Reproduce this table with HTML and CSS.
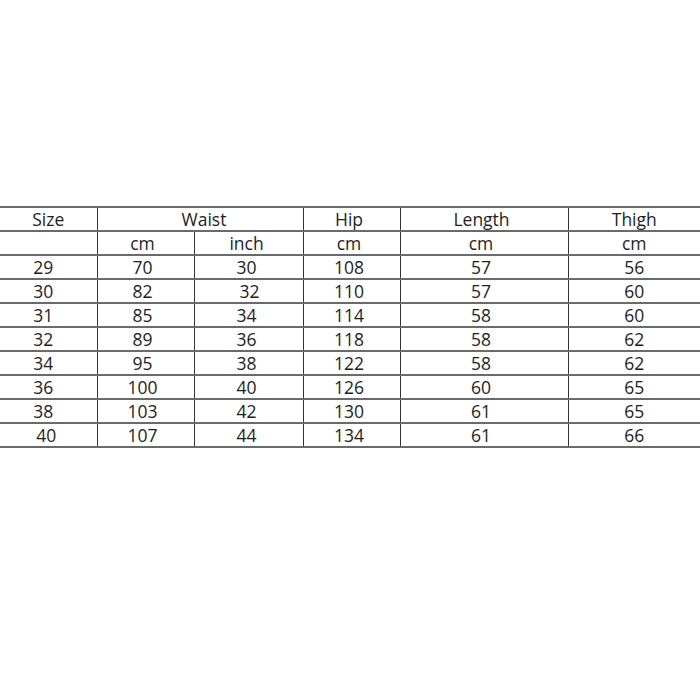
FILE: index.html
```html
<!DOCTYPE html>
<html>
<head>
<meta charset="utf-8">
<link rel="stylesheet" href="styles.css">
</head>
<body>
<div class="page">
<table class="sizes">
<colgroup>
<col class="c-size"><col class="c-wcm"><col class="c-win"><col class="c-hip"><col class="c-len"><col class="c-thigh">
</colgroup>
<tr class="head"><td>Size</td><td colspan="2" class="waist">Waist</td><td class="hip">Hip</td><td class="len">Length</td><td>Thigh</td></tr>
<tr class="row"><td></td><td>cm</td><td>inch</td><td>cm</td><td>cm</td><td>cm</td></tr>
<tr class="row"><td>29</td><td>70</td><td>30</td><td>108</td><td>57</td><td>56</td></tr>
<tr class="row"><td>30</td><td>82</td><td class="nudge">32</td><td>110</td><td>57</td><td>60</td></tr>
<tr class="row"><td>31</td><td>85</td><td>34</td><td>114</td><td>58</td><td>60</td></tr>
<tr class="row"><td>32</td><td>89</td><td>36</td><td>118</td><td>58</td><td>62</td></tr>
<tr class="row"><td>34</td><td>95</td><td>38</td><td>122</td><td>58</td><td>62</td></tr>
<tr class="row"><td>36</td><td>100</td><td>40</td><td>126</td><td>60</td><td>65</td></tr>
<tr class="row"><td>38</td><td>103</td><td>42</td><td>130</td><td>61</td><td>65</td></tr>
<tr class="row"><td class="nudge">40</td><td>107</td><td>44</td><td>134</td><td>61</td><td>66</td></tr>
</table>
</div>
</body>
</html>
```
FILE: styles.css
```css
html, body {
  margin: 0;
  padding: 0;
  background: #fff;
}
.page {
  padding-top: 206px;
}
.sizes {
  width: 700px;
  border-collapse: collapse;
  table-layout: fixed;
  font-family: "Open Sans", "DejaVu Sans", sans-serif;
  font-size: 17.5px;
  color: #1e1e1e;
}
.c-size { width: 97px; }
.c-wcm { width: 97px; }
.c-win { width: 109px; }
.c-hip { width: 97px; }
.c-len { width: 168px; }
.c-thigh { width: 132px; }
.sizes td {
  height: 22px;
  padding: 0;
  text-align: center;
  line-height: 22px;
  border-top: 2px solid #6a6a6a;
  border-bottom: 2px solid #6a6a6a;
  border-left: 1px solid #333;
  border-right: 1px solid #333;
}
.sizes td:first-child { border-left: none; }
.sizes td:last-child { border-right: none; }
.head .waist { padding-left: 8px; }
.head .hip { padding-right: 5px; }
.head .len { padding-right: 5px; }
.row td:nth-child(1) { padding-right: 10px; }
.row td:nth-child(2) { padding-right: 6px; }
.row td:nth-child(3) { padding-right: 4px; }
.row td:nth-child(4) { padding-right: 5px; }
.row td:nth-child(5) { padding-right: 6px; }
.row td.nudge { padding-right: 0; padding-left: 2px; }
.row td:nth-child(1).nudge { padding-right: 4px; padding-left: 0; }
```
